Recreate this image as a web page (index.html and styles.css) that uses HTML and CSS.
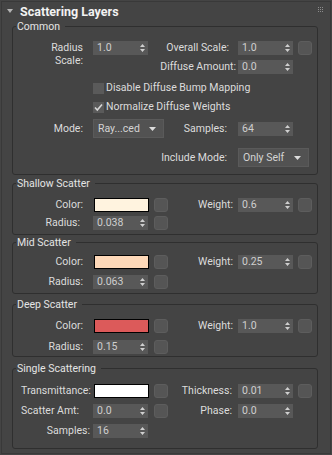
FILE: index.html
```html
<!DOCTYPE html>
<html>
<head>
<meta charset="utf-8">
<link rel="stylesheet" href="styles.css">
</head>
<body>
<div class="rollout">
  <div class="head">
    <svg class="tri" width="6" height="4" viewBox="0 0 6 4"><path d="M0 0H6L3 4Z" fill="#b4b4b4"/></svg>
    <span class="title">Scattering Layers</span>
    <svg class="grip" width="5" height="5" viewBox="0 0 5 5" fill="#8c8c8c">
      <rect x="0" y="0" width="1" height="1"/><rect x="2" y="0" width="1" height="1"/><rect x="4" y="0" width="1" height="1"/>
      <rect x="0" y="2" width="1" height="1"/><rect x="2" y="2" width="1" height="1"/><rect x="4" y="2" width="1" height="1"/>
      <rect x="0" y="4" width="1" height="1"/><rect x="2" y="4" width="1" height="1"/><rect x="4" y="4" width="1" height="1"/>
    </svg>
  </div>

  <fieldset class="grp g-common">
    <legend>Common</legend>
    <div class="row mt8">
      <div class="lbl two">Radius<br>Scale:</div>
      <div class="spin"><span>1.0</span><svg class="arr" width="5" height="10" viewBox="0 0 5 10"><path d="M0 4L2.5 1L5 4ZM0 6L2.5 9L5 6Z"/></svg></div>
      <div></div>
      <div class="lbl pr9">Overall Scale:</div>
      <div class="spin"><span>1.0</span><svg class="arr" width="5" height="10" viewBox="0 0 5 10"><path d="M0 4L2.5 1L5 4ZM0 6L2.5 9L5 6Z"/></svg></div>
      <div class="btn"></div>
    </div>
    <div class="row mt5">
      <div></div><div></div><div></div>
      <div class="lbl pr2">Diffuse Amount:</div>
      <div class="spin"><span>0.0</span><svg class="arr" width="5" height="10" viewBox="0 0 5 10"><path d="M0 4L2.5 1L5 4ZM0 6L2.5 9L5 6Z"/></svg></div>
    </div>
    <div class="row cbrow mt8">
      <div></div>
      <label class="cb"><span class="box"></span>Disable Diffuse Bump Mapping</label>
    </div>
    <div class="row cbrow mt7">
      <div></div>
      <label class="cb"><span class="box"><svg width="11" height="11" viewBox="0 0 11 11"><path d="M2 5.5L4.3 8L9 2.5" fill="none" stroke="#d6d6d6" stroke-width="1.6"/></svg></span>Normalize Diffuse Weights</label>
    </div>
    <div class="row tall mt6">
      <div class="lbl">Mode:</div>
      <div class="dd"><span>Ray...ced</span><svg width="7" height="4" viewBox="0 0 7 4"><path d="M0 0H7L3.5 4Z" fill="#dcdcdc"/></svg></div>
      <div class="lbl pr11">Samples:</div>
      <div class="spin"><span>64</span><svg class="arr" width="5" height="10" viewBox="0 0 5 10"><path d="M0 4L2.5 1L5 4ZM0 6L2.5 9L5 6Z"/></svg></div>
    </div>
    <div class="row tall mt10">
      <div></div><div></div><div></div>
      <div class="lbl pr11">Include Mode:</div>
      <div class="dd dd-r"><span>Only Self</span><svg width="7" height="4" viewBox="0 0 7 4"><path d="M0 0H7L3.5 4Z" fill="#dcdcdc"/></svg></div>
    </div>
  </fieldset>

  <fieldset class="grp g-shallow">
    <legend>Shallow Scatter</legend>
    <div class="row mt8">
      <div class="lbl">Color:</div>
      <div class="sw sw-shallow"></div>
      <div class="btn"></div>
      <div class="lbl pr5">Weight:</div>
      <div class="spin"><span>0.6</span><svg class="arr" width="5" height="10" viewBox="0 0 5 10"><path d="M0 4L2.5 1L5 4ZM0 6L2.5 9L5 6Z"/></svg></div>
      <div class="btn"></div>
    </div>
    <div class="row mt4">
      <div class="lbl pr13">Radius:</div>
      <div class="spin"><span>0.038</span><svg class="arr" width="5" height="10" viewBox="0 0 5 10"><path d="M0 4L2.5 1L5 4ZM0 6L2.5 9L5 6Z"/></svg></div>
      <div class="btn"></div>
    </div>
  </fieldset>

  <fieldset class="grp g-mid">
    <legend>Mid Scatter</legend>
    <div class="row mt6">
      <div class="lbl">Color:</div>
      <div class="sw sw-mid"></div>
      <div class="btn"></div>
      <div class="lbl pr5">Weight:</div>
      <div class="spin"><span>0.25</span><svg class="arr" width="5" height="10" viewBox="0 0 5 10"><path d="M0 4L2.5 1L5 4ZM0 6L2.5 9L5 6Z"/></svg></div>
      <div class="btn"></div>
    </div>
    <div class="row mt6">
      <div class="lbl">Radius:</div>
      <div class="spin"><span>0.063</span><svg class="arr" width="5" height="10" viewBox="0 0 5 10"><path d="M0 4L2.5 1L5 4ZM0 6L2.5 9L5 6Z"/></svg></div>
      <div class="btn"></div>
    </div>
  </fieldset>

  <fieldset class="grp g-deep">
    <legend>Deep Scatter</legend>
    <div class="row mt8">
      <div class="lbl">Color:</div>
      <div class="sw sw-deep"></div>
      <div class="btn"></div>
      <div class="lbl pr5">Weight:</div>
      <div class="spin"><span>1.0</span><svg class="arr" width="5" height="10" viewBox="0 0 5 10"><path d="M0 4L2.5 1L5 4ZM0 6L2.5 9L5 6Z"/></svg></div>
      <div class="btn"></div>
    </div>
    <div class="row mt7">
      <div class="lbl">Radius:</div>
      <div class="spin"><span>0.15</span><svg class="arr" width="5" height="10" viewBox="0 0 5 10"><path d="M0 4L2.5 1L5 4ZM0 6L2.5 9L5 6Z"/></svg></div>
      <div class="btn"></div>
    </div>
  </fieldset>

  <fieldset class="grp g-single">
    <legend>Single Scattering</legend>
    <div class="row mt9">
      <div class="lbl lbl-left">Transmittance:</div>
      <div class="sw sw-white"></div>
      <div class="btn"></div>
      <div class="lbl pr6">Thickness:</div>
      <div class="spin"><span>0.01</span><svg class="arr" width="5" height="10" viewBox="0 0 5 10"><path d="M0 4L2.5 1L5 4ZM0 6L2.5 9L5 6Z"/></svg></div>
      <div class="btn"></div>
    </div>
    <div class="row mt6">
      <div class="lbl lbl-left">Scatter Amt:</div>
      <div class="spin"><span>0.0</span><svg class="arr" width="5" height="10" viewBox="0 0 5 10"><path d="M0 4L2.5 1L5 4ZM0 6L2.5 9L5 6Z"/></svg></div>
      <div class="btn"></div>
      <div class="lbl pr6">Phase:</div>
      <div class="spin"><span>0.0</span><svg class="arr" width="5" height="10" viewBox="0 0 5 10"><path d="M0 4L2.5 1L5 4ZM0 6L2.5 9L5 6Z"/></svg></div>
    </div>
    <div class="row mt6">
      <div class="lbl pr3">Samples:</div>
      <div class="spin"><span>16</span><svg class="arr" width="5" height="10" viewBox="0 0 5 10"><path d="M0 4L2.5 1L5 4ZM0 6L2.5 9L5 6Z"/></svg></div>
    </div>
  </fieldset>
</div>
</body>
</html>
```
FILE: styles.css
```css
html, body {
  margin: 0;
  background: #444444;
}
body {
  font-family: Roboto, "Liberation Sans", sans-serif;
  font-size: 10.5px;
  color: #dcdcdc;
}
.rollout {
  margin: 1px;
  height: 453px;
  box-sizing: border-box;
  border: 1px solid #393939;
}
.head {
  height: 18px;
  box-sizing: border-box;
  padding: 2px 7px 0 5px;
  display: flex;
  align-items: center;
}
.tri {
  align-self: flex-start;
  margin-top: 5px;
  flex: none;
}
.title {
  margin-left: 7px;
  font-weight: bold;
  font-size: 12.5px;
  line-height: 16px;
  color: #f2f2f2;
}
.grip {
  margin-left: auto;
  align-self: flex-start;
  margin-top: 3px;
  flex: none;
}
.grp {
  margin: 0 12px 0 10px;
  padding: 0;
  border: 1px solid #2f2f2f;
  border-radius: 3px;
  min-width: 0;
}
.grp legend {
  margin-left: 3px;
  padding: 0 5px 0 1px;
  line-height: 13px;
  color: #e4e4e4;
}
.g-common { padding-bottom: 7px; }
.g-shallow { margin-top: 2px; padding-bottom: 4px; }
.g-mid { margin-top: 1px; padding-bottom: 4px; }
.g-deep { margin-top: 4px; padding-bottom: 2px; }
.g-single { margin-top: 5px; padding-bottom: 10px; }

.row {
  display: grid;
  grid-template-columns: 80px 61px 14px 70px 60px 14px;
  grid-template-rows: 100%;
  align-items: center;
  height: 14px;
}
.row.tall { height: 19px; }
.row.cbrow { height: 12px; }
.mt4 { margin-top: 4px; }
.mt5 { margin-top: 5px; }
.mt6 { margin-top: 6px; }
.mt7 { margin-top: 7px; }
.mt8 { margin-top: 8px; }
.mt9 { margin-top: 9px; }
.mt10 { margin-top: 10px; }

.lbl {
  display: flex;
  justify-content: flex-end;
  padding-right: 10px;
  white-space: nowrap;
  line-height: 14px;
  text-align: right;
}
.lbl.two {
  display: block;
  align-self: start;
  line-height: 13px;
}
.lbl-left { justify-content: flex-start; padding: 0 0 0 8px; }
.pr2 { padding-right: 2px; }
.pr3 { padding-right: 3px; }
.pr5 { padding-right: 5px; }
.pr6 { padding-right: 6px; }
.pr9 { padding-right: 9px; }
.pr11 { padding-right: 11px; }
.pr13 { padding-right: 13px; }

.spin {
  width: 55px;
  height: 14px;
  box-sizing: border-box;
  background: #585858;
  color: #cfcfcf;
  display: flex;
  align-items: center;
  justify-content: space-between;
  padding: 0 3px 0 4px;
  line-height: 14px;
}
.arr { fill: #cfcfcf; flex: none; }
.btn {
  width: 14px;
  height: 14px;
  box-sizing: border-box;
  border-radius: 3px;
  background: #555555;
  border: 1px solid #5d5d5d;
}
.sw {
  width: 55px;
  height: 14px;
  box-sizing: border-box;
  border: 1px solid #000;
  margin-left: 1px;
}
.sw-shallow { background: #fff3df; }
.sw-mid { background: #fdd8b8; }
.sw-deep { background: #dc5a5a; }
.sw-white { background: #ffffff; }

.cb {
  grid-column: 2 / span 5;
  display: flex;
  align-items: center;
  line-height: 12px;
  white-space: nowrap;
}
.box {
  width: 11px;
  height: 11px;
  background: #5a5a5a;
  margin-right: 2px;
  flex: none;
  display: block;
}
.box svg { display: block; }

.dd {
  grid-column: 2 / span 2;
  width: 71px;
  height: 19px;
  box-sizing: border-box;
  background: #525252;
  border: 1px solid #5a5a5a;
  display: flex;
  align-items: center;
  justify-content: space-between;
  padding: 0 7px 0 4px;
  color: #d4d4d4;
}
.dd-r { grid-column: 5 / span 2; }
```
